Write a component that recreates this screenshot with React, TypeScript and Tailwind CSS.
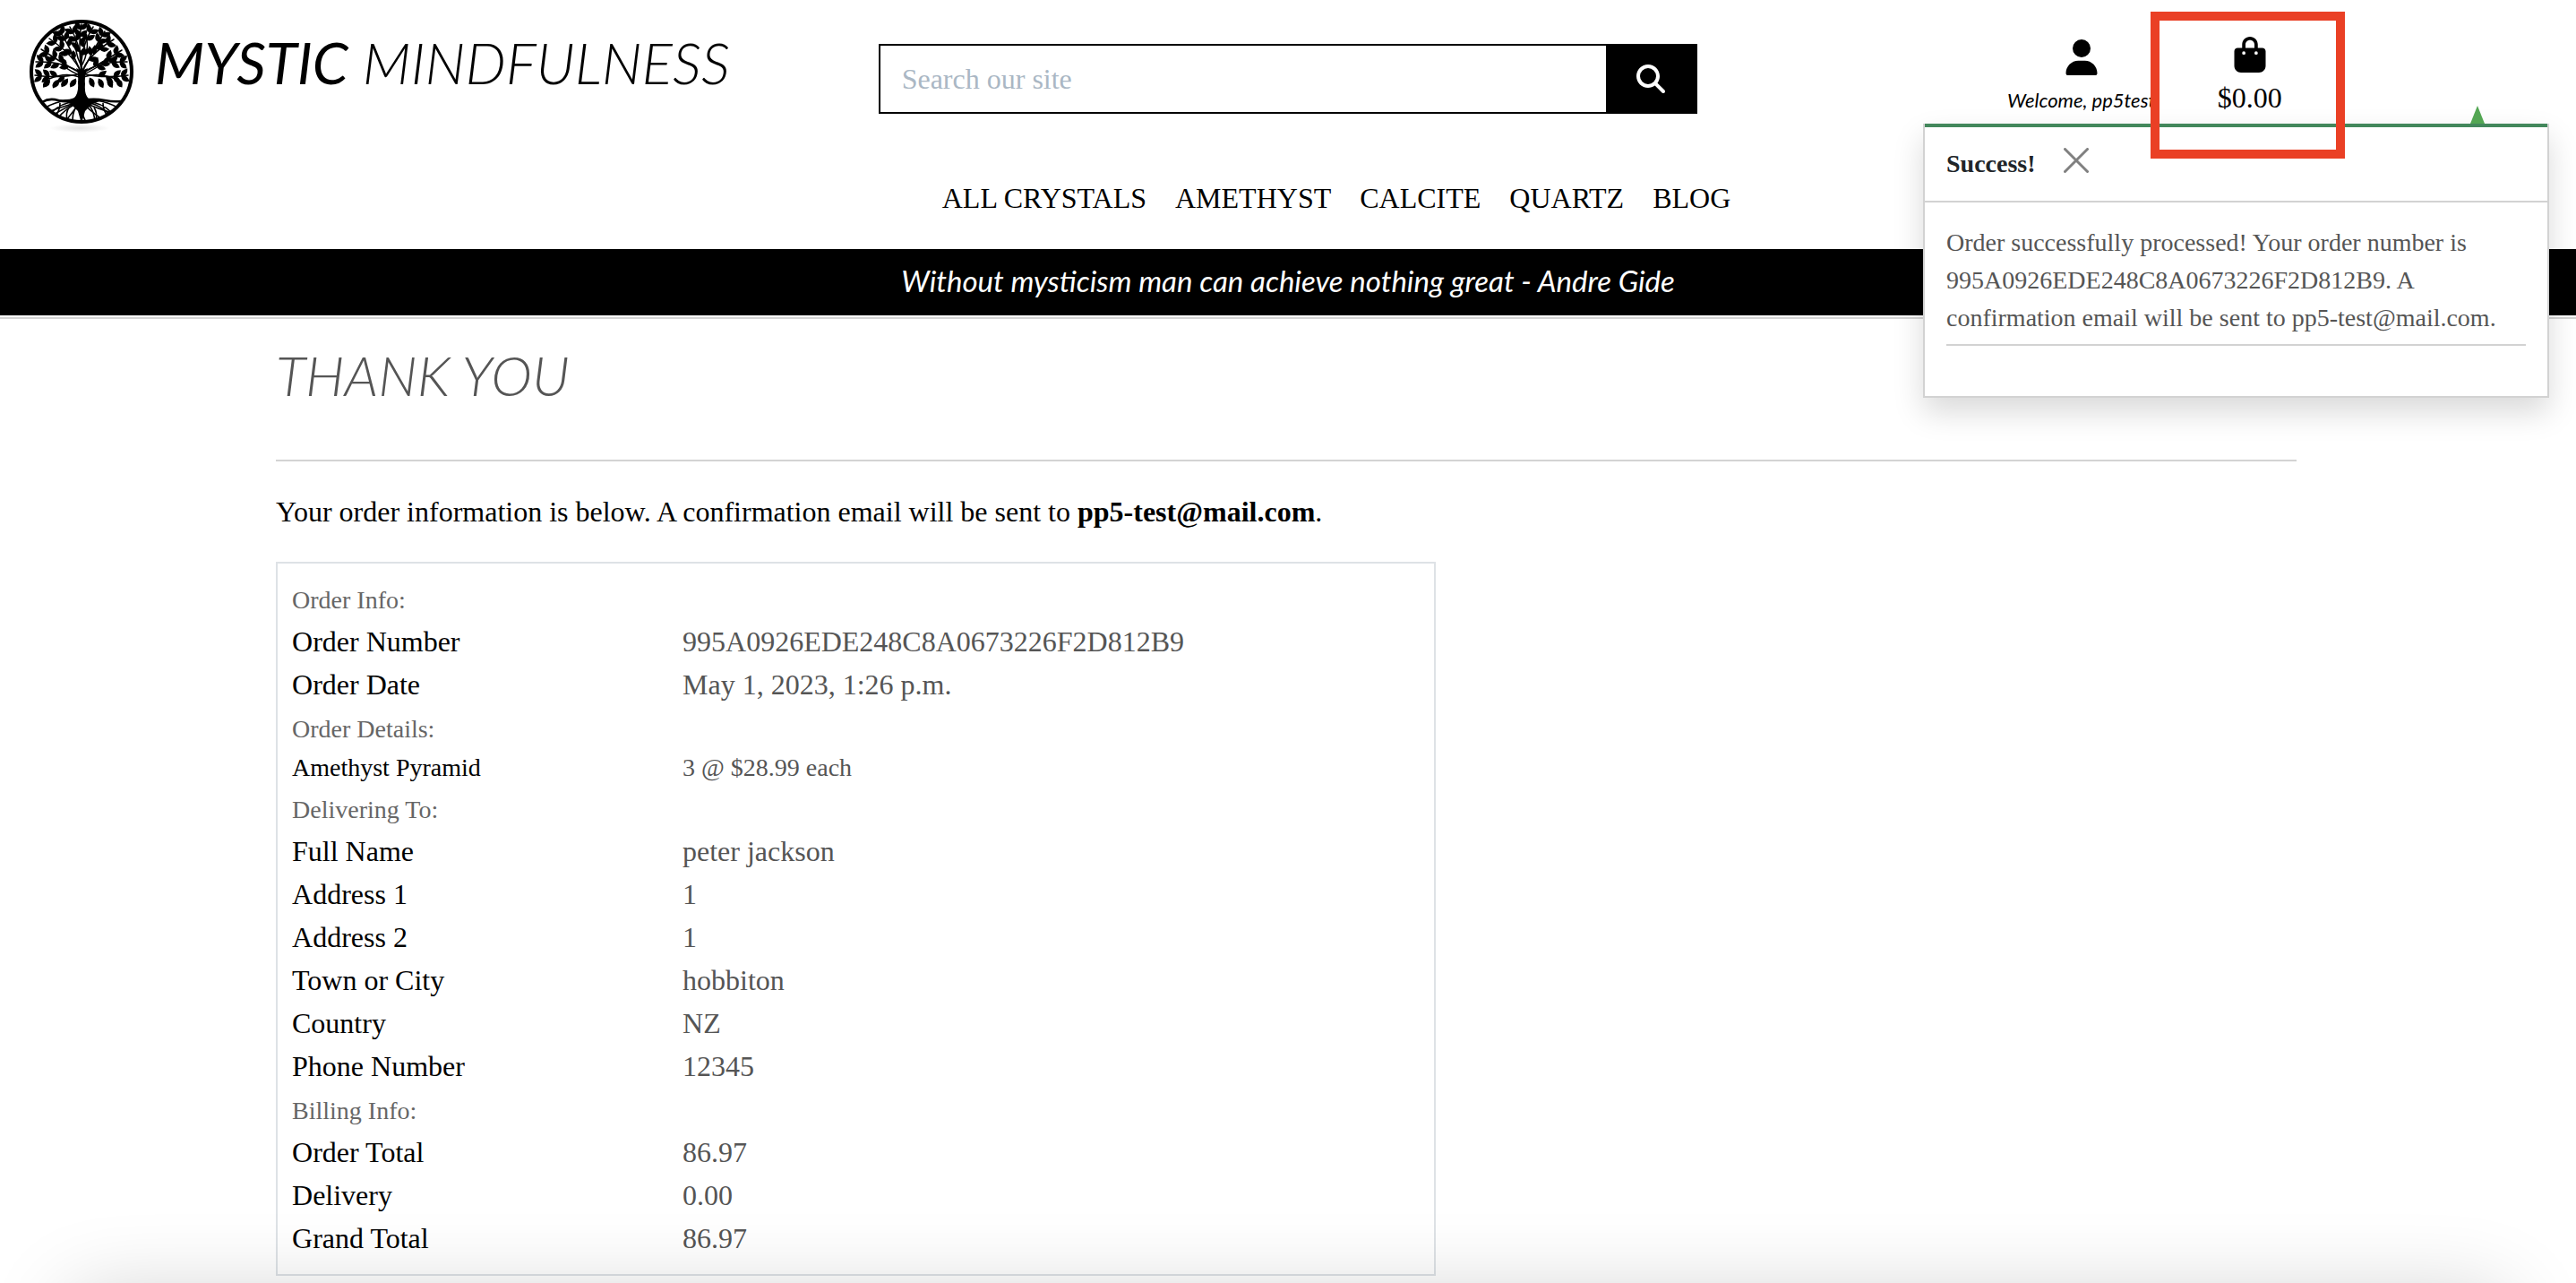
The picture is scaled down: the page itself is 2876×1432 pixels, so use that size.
import { FaBagShopping, FaMagnifyingGlass, FaUser } from "react-icons/fa6";

const navLinks = ["ALL CRYSTALS", "AMETHYST", "CALCITE", "QUARTZ", "BLOG"];

type Row = { label: string; value?: string; kind?: "heading" | "item" };

const rows: Row[] = [
  { label: "Order Info:", kind: "heading" },
  { label: "Order Number", value: "995A0926EDE248C8A0673226F2D812B9" },
  { label: "Order Date", value: "May 1, 2023, 1:26 p.m." },
  { label: "Order Details:", kind: "heading" },
  { label: "Amethyst Pyramid", value: "3 @ $28.99 each", kind: "item" },
  { label: "Delivering To:", kind: "heading" },
  { label: "Full Name", value: "peter jackson" },
  { label: "Address 1", value: "1" },
  { label: "Address 2", value: "1" },
  { label: "Town or City", value: "hobbiton" },
  { label: "Country", value: "NZ" },
  { label: "Phone Number", value: "12345" },
  { label: "Billing Info:", kind: "heading" },
  { label: "Order Total", value: "86.97" },
  { label: "Delivery", value: "0.00" },
  { label: "Grand Total", value: "86.97" },
];

// Branches of the emblem: end point and the control point that bends them.
const branches = [
  { c: [34, 66], e: [6, 62] },
  { c: [38, 46], e: [7, 47] },
  { c: [42, 52], e: [13, 33] },
  { c: [50, 40], e: [22, 21] },
  { c: [44, 28], e: [33, 12] },
  { c: [60, 34], e: [45, 8] },
  { c: [54, 26], e: [58, 5] },
  { c: [56, 32], e: [71, 8] },
  { c: [72, 32], e: [84, 13] },
  { c: [64, 40], e: [94, 22] },
  { c: [74, 52], e: [103, 34] },
  { c: [78, 46], e: [109, 47] },
  { c: [82, 66], e: [110, 62] },
];

const point = (c: number[], e: number[], t: number) => {
  const u = 1 - t;
  return [
    u * u * 58 + 2 * u * t * c[0] + t * t * e[0],
    u * u * 60 + 2 * u * t * c[1] + t * t * e[1],
  ];
};

function TreeLogo() {
  const leaves: { x: number; y: number; a: number }[] = [];
  branches.forEach(({ c, e }, i) => {
    [0.38, 0.54, 0.7, 0.86].forEach((t, j) => {
      const [x, y] = point(c, e, t);
      const [nx, ny] = point(c, e, t + 0.04);
      const dir = (Math.atan2(ny - y, nx - x) * 180) / Math.PI;
      const side = (i + j) % 2 ? 1 : -1;
      leaves.push({ x, y, a: dir + side * 38 });
      if (j > 1) leaves.push({ x, y, a: dir - side * 44 });
    });
  });
  const droop = [
    [22, 66, 125], [32, 66, 120], [42, 65, 122], [51, 65, 118],
    [66, 65, 60], [76, 66, 58], [86, 66, 56], [96, 66, 52],
  ];
  const roots = [12, 22, 31, 40, 48, 56, 64, 73, 82, 92, 102];
  return (
    <svg viewBox="0 0 116 128" className="h-32 w-29 shrink-0" role="img" aria-label="Tree of life emblem">
      <defs>
        <clipPath id="disc"><circle cx="58" cy="58" r="56" /></clipPath>
        <radialGradient id="ground">
          <stop offset="0" stopColor="#e2e2e2" />
          <stop offset="1" stopColor="#ffffff" />
        </radialGradient>
      </defs>
      <ellipse cx="56" cy="121" rx="34" ry="5" fill="url(#ground)" />
      <g clipPath="url(#disc)">
        <g fill="none" stroke="#000" strokeWidth="1.5" strokeLinecap="round">
          {branches.map(({ c, e }) => (
            <path key={e.join()} d={`M58 60Q${c[0]} ${c[1]} ${e[0]} ${e[1]}`} />
          ))}
          <path d="M58 62Q48 60 36 50M58 62Q68 58 80 50M56 64Q40 58 22 66M60 64Q76 58 96 66M57 50Q50 36 52 22M59 50Q66 36 64 22" />
        </g>
        {leaves.map((l, i) => (
          <path key={i} d="M0 0Q4 -5.500 11 0Q5 6 0 0" transform={`translate(${l.x} ${l.y}) rotate(${l.a})`} />
        ))}
        {droop.map(([x, y, a]) => (
          <path key={x} d="M0 -1Q6 -7 12 0Q7 6 0 -1" transform={`translate(${x} ${y}) rotate(${a})`} />
        ))}
        <path d="M52 54Q58 58 65 54Q61 62 62 72Q61 84 66 88Q74 90 84 89L70 94L62 102L58 116L54 102L46 94L32 89Q44 90 50 87Q55 82 54 70Q55 60 52 54Z" />
        <path d="M14 92Q22 87 32 90T50 89M66 89Q74 88 84 90T102 91" fill="none" stroke="#000" strokeWidth="2.500" />
        <g fill="none" stroke="#000" strokeWidth="1.600">
          {roots.map((x, i) => (
            <path key={x} d={`M58 91Q${(58 + x) / 2 + (i % 2 ? 6 : -6)} ${i % 2 ? 94 : 99} ${x} ${118 - Math.abs(x - 58) / 4}`} />
          ))}
          <path d="M50 92Q36 92 24 104M42 90Q28 92 18 98M66 92Q80 92 92 104M74 90Q88 92 98 98M44 98Q40 104 42 112M72 98Q76 104 74 112M34 93Q34 100 30 106M82 93Q82 100 86 106" />
        </g>
      </g>
      <circle cx="58" cy="58" r="56" fill="none" stroke="#000" strokeWidth="4" />
    </svg>
  );
}

const script = "font-['Lato',sans-serif] italic";

function Header() {
  return (
    <header>
      <div className="grid grid-cols-3 items-start">
        <a href="#home" className="flex items-start gap-6 pt-5.5 pl-[33px]">
          <TreeLogo />
          <span className={`${script} pt-4 text-[64px] leading-16 font-light whitespace-nowrap`}>
            <span className="font-normal">MYSTIC</span> MINDFULNESS
          </span>
        </a>
        <form className="mx-[22px] mt-[49px] flex h-[78px] border-2 border-black" onSubmit={(e) => e.preventDefault()}>
          <input
            type="search"
            aria-label="Search our site"
            placeholder="Search our site"
            className="min-w-0 flex-1 px-6 placeholder:text-[#aab7c4] outline-none"
          />
          <button type="submit" aria-label="Search" className="grid w-25 place-items-center bg-black text-white">
            <FaMagnifyingGlass className="size-8" />
          </button>
        </form>
        <div className="flex justify-center gap-[74px]">
          <a href="#account" className="flex w-[156px] flex-col items-center gap-1 pt-11">
            <FaUser className="size-10" />
            <span className={`${script} text-[22px] leading-12 whitespace-nowrap`}>Welcome, pp5test</span>
          </a>
          <a href="#bag" className="flex flex-col items-center gap-1 pt-[41px]">
            <FaBagShopping className="size-10" />
            <span>$0.00</span>
          </a>
        </div>
      </div>
      <nav className="mt-[47px] flex justify-center gap-8 pl-27">
        {navLinks.map((n) => (
          <a key={n} href={`#${n.toLowerCase().replace(" ", "-")}`}>{n}</a>
        ))}
      </nav>
    </header>
  );
}

function SuccessToast() {
  return (
    <div role="status" className="absolute top-[138px] right-[30px] w-[699px] border-2 border-t-0 border-[#d2d2d2] bg-white text-[28px] leading-[42px] shadow-[0_16px_32px_rgba(0,0,0,0.15)]">
      <div className="absolute -top-5 right-[70px] h-0 w-0 border-x-8 border-b-20 border-x-transparent border-b-[#53a653]" />
      <div className="h-1 bg-[#43885c]" />
      <div className="flex h-21 items-center gap-[31px] border-b-2 border-[#d2d2d2] px-6">
        <strong className="text-[#212529]">Success!</strong>
        <button type="button" aria-label="Close" className="pb-2">
          <svg viewBox="0 0 28 28" className="size-7" stroke="#808080" strokeWidth="3" strokeLinecap="round">
            <path d="M1.500 1.500L26.500 26.500M26.500 1.500L1.500 26.500" />
          </svg>
        </button>
      </div>
      <div className="px-6 pt-6 pb-14 text-[#555]">
        <p className="border-b-2 border-[#d2d2d2] pb-2">
          Order successfully processed! Your order number is 995A0926EDE248C8A0673226F2D812B9. A
          confirmation email will be sent to pp5-test@mail.com.
        </p>
      </div>
    </div>
  );
}

export default function App() {
  return (
    <div className="relative min-h-screen overflow-hidden bg-white font-['Liberation_Serif',serif] text-[32px] leading-12 text-black">
      <Header />
      <div className={`${script} mt-[33px] bg-black pb-1 text-center text-[33px] leading-[70px] text-white`}>
        Without mysticism man can achieve nothing great - Andre Gide
      </div>
      <div className="mt-0.5 h-0.5 bg-[#d3d3d3]" />
      <main className="ml-[10.71%] w-[78.44%] pt-7">
        <h1 className={`${script} text-[62px] leading-[68px] font-light text-[#555]`}>THANK YOU</h1>
        <hr className="mt-[61px] border-t-2 border-[#d3d3d3]" />
        <p className="mt-8">
          Your order information is below. A confirmation email will be sent to <strong>pp5-test@mail.com</strong>.
        </p>
        <section className="mt-8 w-[57.4%] border-2 border-[#dee2e6] px-4 pt-[15px] pb-4">
          <table className="w-full table-fixed border-collapse text-left">
            <colgroup>
              <col className="w-[436px]" />
              <col />
            </colgroup>
            <tbody>
              {rows.map((r) =>
                r.kind === "heading" ? (
                  <tr key={r.label}>
                    <th colSpan={2} className="p-0 font-normal text-[#666]">
                      <span className="text-[28px] leading-none">{r.label}</span>
                    </th>
                  </tr>
                ) : (
                  <tr key={r.label} className={r.kind === "item" ? "text-[28px] leading-[42px]" : ""}>
                    <th className="p-0 font-normal">{r.label}</th>
                    <td className="p-0 text-[#555]">{r.value}</td>
                  </tr>
                ),
              )}
            </tbody>
          </table>
        </section>
      </main>
      <SuccessToast />
      <div className="absolute top-[13px] right-[258px] h-[164px] w-[217px] border-10 border-[#ea4025]" />
      <div className="pointer-events-none fixed inset-x-20 -bottom-44 h-40 shadow-[0_0_96px_rgba(0,0,0,0.2)]" />
    </div>
  );
}
